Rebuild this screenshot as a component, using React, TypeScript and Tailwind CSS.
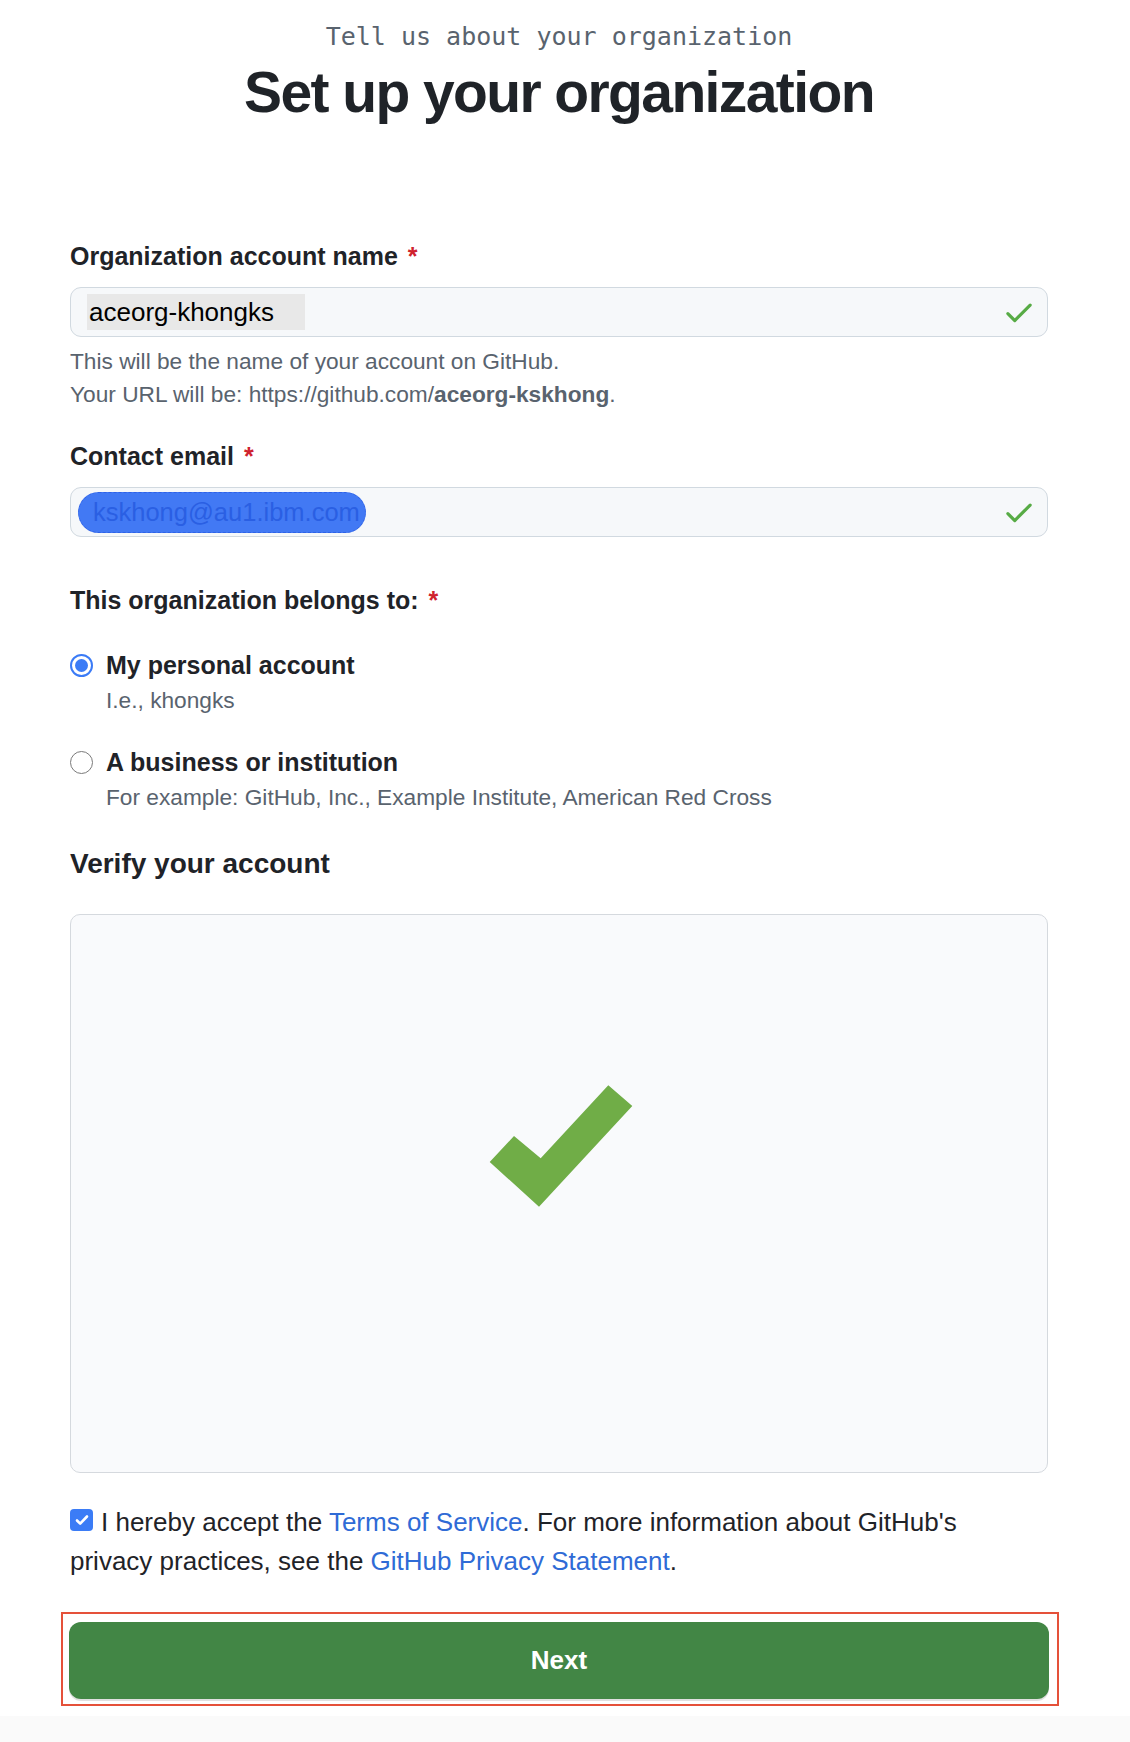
import React from "react";

const sans = "font-['Liberation_Sans',Arial,sans-serif]";

const Required = () => <span className="ml-[10px] text-[#cf222e]">*</span>;

const InputCheck = () => (
  <svg viewBox="0 0 16 16" width="34" height="34" className="fill-[#57ab45]">
    <path d="M13.78 4.22a.75.75 0 0 1 0 1.06l-7.25 7.25a.75.75 0 0 1-1.06 0L2.22 9.28a.751.751 0 0 1 .018-1.042.751.751 0 0 1 1.042-.018L6 10.94l6.72-6.72a.75.75 0 0 1 1.06 0Z" />
  </svg>
);

const Radio = ({ checked }: { checked?: boolean }) =>
  checked ? (
    <span className="flex h-[23px] w-[23px] shrink-0 items-center justify-center rounded-full border-2 border-[#3b7bf6] bg-white">
      <span className="h-[13px] w-[13px] rounded-full bg-[#3b7bf6]" />
    </span>
  ) : (
    <span className="h-[23px] w-[23px] shrink-0 rounded-full border-[1.5px] border-[#7a7a7a] bg-white" />
  );

export default function App() {
  return (
    <div className={`${sans} min-h-[1742px] bg-white text-[#1f2328]`}>
      <div className="ml-[70px] w-[978px]">
        {/* header */}
        <div className="pt-[22px] text-center">
          <p className="font-['DejaVu_Sans_Mono',monospace] text-[25px] leading-[30px] text-[#59636e]">
            Tell us about your organization
          </p>
          <h1 className="mt-[12px] text-[57px] font-bold leading-[57px] tracking-[-1.6px] text-[#1f2328]">
            Set up your organization
          </h1>
        </div>

        {/* account name */}
        <label className="mt-[120px] block text-[25px] font-bold leading-[30px]">
          Organization account name
          <Required />
        </label>
        <div className="mt-[16px] flex h-[50px] items-center justify-between rounded-[11px] border border-[#d1d9e0] bg-[#f6f8fa] pl-[16px] pr-[11px]">
          <span className="bg-[#e8e8e8] pl-[2px] pr-[31px] text-[26px] leading-[36px] text-black">
            aceorg-khongks
          </span>
          <InputCheck />
        </div>
        <p className="mt-[8px] text-[22.7px] leading-[33px] text-[#59636e]">
          This will be the name of your account on GitHub.
        </p>
        <p className="text-[22.7px] leading-[33px] text-[#59636e]">
          Your URL will be: https://github.com/<b className="font-bold">aceorg-kskhong</b>.
        </p>

        {/* email */}
        <label className="mt-[30px] block text-[25px] font-bold leading-[30px]">
          Contact email
          <Required />
        </label>
        <div className="mt-[16px] flex h-[50px] items-center justify-between rounded-[11px] border border-[#d1d9e0] bg-[#f6f8fa] pl-[7px] pr-[11px]">
          <span className="rounded-full border border-dashed border-[#2f62e6] bg-[#4279f4] pl-[14px] pr-[5px] text-[25.5px] leading-[39px] text-[#2a5fe3]">
            kskhong@au1.ibm.com
          </span>
          <InputCheck />
        </div>

        {/* belongs to */}
        <p className="mt-[48px] text-[25px] font-bold leading-[30px]">
          This organization belongs to:
          <Required />
        </p>
        <div className="mt-[35px] flex items-center gap-[13px]">
          <Radio checked />
          <span className="text-[25px] font-bold leading-[30px]">My personal account</span>
        </div>
        <p className="mt-[4px] pl-[36px] text-[22.7px] leading-[33px] text-[#59636e]">I.e., khongks</p>
        <div className="mt-[30px] flex items-center gap-[13px]">
          <Radio />
          <span className="text-[25px] font-bold leading-[30px]">A business or institution</span>
        </div>
        <p className="mt-[4px] pl-[36px] text-[22.7px] leading-[33px] text-[#59636e]">
          For example: GitHub, Inc., Example Institute, American Red Cross
        </p>

        {/* verify */}
        <h2 className="mt-[33px] text-[28px] font-bold leading-[34px]">Verify your account</h2>
        <div className="mt-[33px] h-[559px] rounded-[10px] border border-[#d5d9de] bg-[#f9fafc] pt-[169px]">
          <svg
            viewBox="486 1083 148 124"
            width="148"
            height="124"
            className="mx-auto block"
          >
            <polygon
              points="490.7,1161 515,1135 541.7,1157.3 609.3,1084.3 633.3,1105 540,1205.7"
              fill="#70ad47"
            />
          </svg>
        </div>

        {/* terms */}
        <p className="mt-[30px] pr-[20px] text-[26px] leading-[39px] text-[#1f2328]">
          <span className="mr-[8px] inline-flex h-[22px] w-[23px] -translate-y-[3px] items-center justify-center rounded-[4px] bg-[#3b7cf6] align-baseline">
            <svg viewBox="0 0 16 16" width="16" height="16" fill="none" stroke="white" strokeWidth="2.6" strokeLinecap="round" strokeLinejoin="round">
              <path d="M3 8.5l3.2 3.2L13 4.5" />
            </svg>
          </span>
          I hereby accept the <a className="text-[#2f6bd6]">Terms of Service</a>. For more information about GitHub's
          privacy practices, see the <a className="text-[#2f6bd6]">GitHub Privacy Statement</a>.
        </p>

        {/* next */}
        <div className="-ml-[9px] mt-[31px] w-[998px] border-2 border-[#e5513a] pb-[5px] pl-[6px] pr-[8px] pt-[8px]">
          <button className="flex h-[77px] w-[980px] items-center justify-center rounded-[12px] bg-[#428645] text-[26px] font-bold text-white shadow-[0_2px_0_rgba(0,0,0,0.12)]">
            Next
          </button>
        </div>
      </div>
      <div className="mt-[10px] h-[26px] bg-[#fafafa]" />
    </div>
  );
}
